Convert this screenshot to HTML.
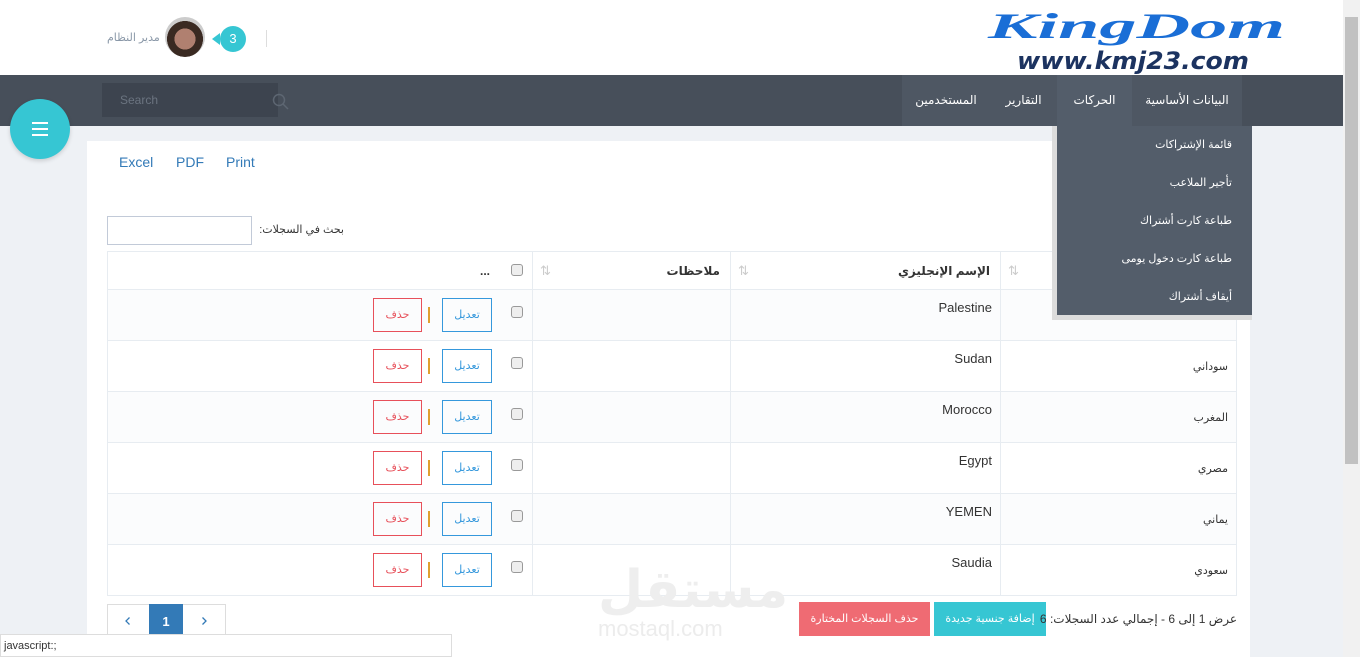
<!DOCTYPE html>
<html><head><meta charset="utf-8"><style>
*{box-sizing:border-box;margin:0;padding:0}
body{width:1360px;height:657px;overflow:hidden;background:#eef1f5;font-family:"Liberation Sans","DejaVu Sans",sans-serif;position:relative;font-size:12px;color:#333}
.abs{position:absolute}
#top{left:0;top:0;width:1343px;height:75px;background:#fff}
#nav{left:0;top:75px;width:1343px;height:51px;background:#474f5a}
.ni{position:absolute;top:0;height:51px;line-height:51px;color:#fff;font-size:12px;text-align:center}
#panel{left:87px;top:141px;width:1163px;height:516px;background:#fff}
table{position:absolute;left:107px;top:251px;border-collapse:collapse;width:1130px}
td,th{border:1px solid #e7ecf1;height:51px;font-size:13px}
th{height:39px;font-size:12px}
tr.o td{background:#fbfcfd}
.cb{position:absolute;width:12px;height:12px;border:1px solid #999;border-radius:3px;background:#eee}
.be{position:absolute;width:50px;height:34px;border:1px solid #3598dc;color:#3598dc;text-align:center;line-height:32px;font-size:11px}
.bd{position:absolute;width:49px;height:34px;border:1px solid #e7505a;color:#e7505a;text-align:center;line-height:32px;font-size:11px}
.sep{position:absolute;width:2px;height:16px;background:#e0a030}
.dd{position:absolute;right:20px;color:#fff;font-size:11px}
#sb{left:1343px;top:0;width:17px;height:657px;background:#f1f1f1}
</style></head><body>
<div class="abs" id="top"></div>
<svg class="abs" style="left:985px;top:5px" width="305" height="70">
<text x="3" y="33" textLength="297" lengthAdjust="spacingAndGlyphs" font-family="Liberation Serif" font-style="italic" font-weight="bold" font-size="36" fill="#1a6ed6">KingDom</text>
<text x="32" y="64" textLength="232" lengthAdjust="spacingAndGlyphs" font-family="DejaVu Sans" font-style="italic" font-weight="bold" font-size="24" fill="#1c3360">www.kmj23.com</text>
</svg>
<div class="abs" style="left:107px;top:31px;font-size:11px;color:#8a98a8">مدير النظام</div>
<div class="abs" style="left:165px;top:17px;width:40px;height:40px;border-radius:50%;background:radial-gradient(circle at 50% 55%,#b08070 0 35%,#3a2a22 36% 60%,#ccc 61%)"></div>
<div class="abs" style="left:220px;top:26px;width:26px;height:26px;border-radius:50%;background:#36c6d3;color:#fff;text-align:center;line-height:26px;font-size:13px">3</div>
<div class="abs" style="left:212px;top:33px;width:0;height:0;border:6px solid transparent;border-right:8px solid #36c6d3;border-left:0"></div>
<div class="abs" style="left:266px;top:30px;width:1px;height:17px;background:#ddd"></div>
<div class="abs" id="nav"></div>
<div class="abs" style="left:102px;top:83px;width:176px;height:34px;background:#3d444f;color:#6b7480;font-size:12px;line-height:34px;padding-left:18px">Search</div>
<svg class="abs" style="left:272px;top:93px" width="18" height="18"><circle cx="7" cy="7" r="5.5" stroke="#5d6672" stroke-width="1.5" fill="none"/><line x1="11" y1="11" x2="16" y2="16" stroke="#5d6672" stroke-width="1.5"/></svg>
<div class="ni" style="left:902px;top:75px;width:88px;background:#4e5763">المستخدمين</div>
<div class="ni" style="left:990px;top:75px;width:67px;background:#4e5763">التقارير</div>
<div class="ni" style="left:1057px;top:75px;width:75px;background:#535d6a">الحركات</div>
<div class="ni" style="left:1132px;top:75px;width:110px;background:#4e5763">البيانات الأساسية</div>
<div class="abs" style="left:10px;top:99px;width:60px;height:60px;border-radius:50%;background:#36c6d3;box-shadow:0 2px 4px rgba(0,0,0,.15)"></div>
<div class="abs" style="left:32px;top:122px;width:16px;height:2px;background:#fff;box-shadow:0 6px 0 #fff,0 12px 0 #fff"></div>
<div class="abs" id="panel"></div>
<div class="abs" style="left:119px;top:154px;font-size:14px;color:#337ab7">Excel</div>
<div class="abs" style="left:176px;top:154px;font-size:14px;color:#337ab7">PDF</div>
<div class="abs" style="left:226px;top:154px;font-size:14px;color:#337ab7">Print</div>
<div class="abs" style="left:258px;top:223px;font-size:11px;direction:rtl;width:86px;text-align:right;white-space:nowrap">بحث في السجلات:</div>
<div class="abs" style="left:107px;top:216px;width:145px;height:29px;border:1px solid #c2cad8"></div>
<table>
<tr><th style="width:425px;text-align:right;padding-right:42px;height:38px">...</th><th style="width:198px;text-align:right;padding-right:10px;height:38px">ملاحظات</th><th style="width:270px;text-align:right;padding-right:10px;height:38px">الإسم الإنجليزي</th><th style="height:38px"></th></tr>
<tr class="o"><td></td><td></td><td style="text-align:right;padding-right:8px;vertical-align:top;padding-top:10px">Palestine</td><td></td></tr>
<tr><td></td><td></td><td style="text-align:right;padding-right:8px;vertical-align:top;padding-top:10px">Sudan</td><td style="text-align:right;padding-right:8px;font-size:11px">سوداني</td></tr>
<tr class="o"><td></td><td></td><td style="text-align:right;padding-right:8px;vertical-align:top;padding-top:10px">Morocco</td><td style="text-align:right;padding-right:8px;font-size:11px">المغرب</td></tr>
<tr><td></td><td></td><td style="text-align:right;padding-right:8px;vertical-align:top;padding-top:10px">Egypt</td><td style="text-align:right;padding-right:8px;font-size:11px">مصري</td></tr>
<tr class="o"><td></td><td></td><td style="text-align:right;padding-right:8px;vertical-align:top;padding-top:10px">YEMEN</td><td style="text-align:right;padding-right:8px;font-size:11px">يماني</td></tr>
<tr><td></td><td></td><td style="text-align:right;padding-right:8px;vertical-align:top;padding-top:10px">Saudia</td><td style="text-align:right;padding-right:8px;font-size:11px">سعودي</td></tr>
</table>
<div class="cb" style="left:511px;top:264px"></div>
<div class="abs" style="left:540px;top:263px;color:#ccc;font-size:13px">⇅</div>
<div class="abs" style="left:738px;top:263px;color:#ccc;font-size:13px">⇅</div>
<div class="abs" style="left:1008px;top:263px;color:#ccc;font-size:13px">⇅</div>
<div class="cb" style="left:511px;top:306px"></div><div class="be" style="left:442px;top:298px">تعديل</div><div class="sep" style="left:428px;top:307px"></div><div class="bd" style="left:373px;top:298px">حذف</div>
<div class="cb" style="left:511px;top:357px"></div><div class="be" style="left:442px;top:349px">تعديل</div><div class="sep" style="left:428px;top:358px"></div><div class="bd" style="left:373px;top:349px">حذف</div>
<div class="cb" style="left:511px;top:408px"></div><div class="be" style="left:442px;top:400px">تعديل</div><div class="sep" style="left:428px;top:409px"></div><div class="bd" style="left:373px;top:400px">حذف</div>
<div class="cb" style="left:511px;top:459px"></div><div class="be" style="left:442px;top:451px">تعديل</div><div class="sep" style="left:428px;top:460px"></div><div class="bd" style="left:373px;top:451px">حذف</div>
<div class="cb" style="left:511px;top:510px"></div><div class="be" style="left:442px;top:502px">تعديل</div><div class="sep" style="left:428px;top:511px"></div><div class="bd" style="left:373px;top:502px">حذف</div>
<div class="cb" style="left:511px;top:561px"></div><div class="be" style="left:442px;top:553px">تعديل</div><div class="sep" style="left:428px;top:562px"></div><div class="bd" style="left:373px;top:553px">حذف</div>
<div class="abs" style="left:1052px;top:126px;width:200px;height:194px;background:#dcdcdc"></div>
<div class="abs" style="left:1057px;top:126px;width:195px;height:189px;background:#535d6a">
<div class="dd" style="top:12px">قائمة الإشتراكات</div>
<div class="dd" style="top:50px">تأجير الملاعب</div>
<div class="dd" style="top:88px">طباعة كارت أشتراك</div>
<div class="dd" style="top:126px">طباعة كارت دخول يومى</div>
<div class="dd" style="top:164px">أيقاف أشتراك</div>
</div>
<div class="abs" style="left:598px;top:560px;font-size:52px;font-weight:bold;color:#eee;font-family:'DejaVu Sans',sans-serif">مستقل</div>
<div class="abs" style="left:598px;top:616px;font-size:22px;color:#ececec">mostaql.com</div>
<div class="abs" style="left:107px;top:604px;width:119px;height:36px;border:1px solid #ddd;background:#fff"></div>
<div class="abs" style="left:149px;top:604px;width:34px;height:36px;background:#337ab7;color:#fff;text-align:center;line-height:36px;font-weight:bold;font-size:13px">1</div>
<svg class="abs" style="left:124px;top:616px" width="8" height="10"><path d="M5.5 1.5L2 5l3.5 3.5" stroke="#337ab7" stroke-width="1.3" fill="none"/></svg>
<svg class="abs" style="left:200px;top:616px" width="8" height="10"><path d="M2.5 1.5L6 5 2.5 8.5" stroke="#337ab7" stroke-width="1.3" fill="none"/></svg>
<div class="abs" style="left:799px;top:602px;width:131px;height:34px;background:#ef6b73;color:#fff;text-align:center;line-height:34px;font-size:11px">حذف السجلات المختارة</div>
<div class="abs" style="left:934px;top:602px;width:112px;height:34px;background:#36c6d3;color:#fff;text-align:center;line-height:34px;font-size:11px">إضافة جنسية جديدة</div>
<div class="abs" style="left:1037px;top:612px;font-size:12px;direction:rtl;width:200px;text-align:right;white-space:nowrap">عرض 1 إلى 6 - إجمالي عدد السجلات: 6</div>
<div class="abs" style="left:0;top:634px;width:452px;height:23px;background:#fff;border:1px solid #ddd;font-size:11px;line-height:22px;padding-left:3px">javascript:;</div>
<div class="abs" id="sb"></div>
<div class="abs" style="left:1345px;top:17px;width:13px;height:447px;background:#c1c1c1"></div>
</body></html>
